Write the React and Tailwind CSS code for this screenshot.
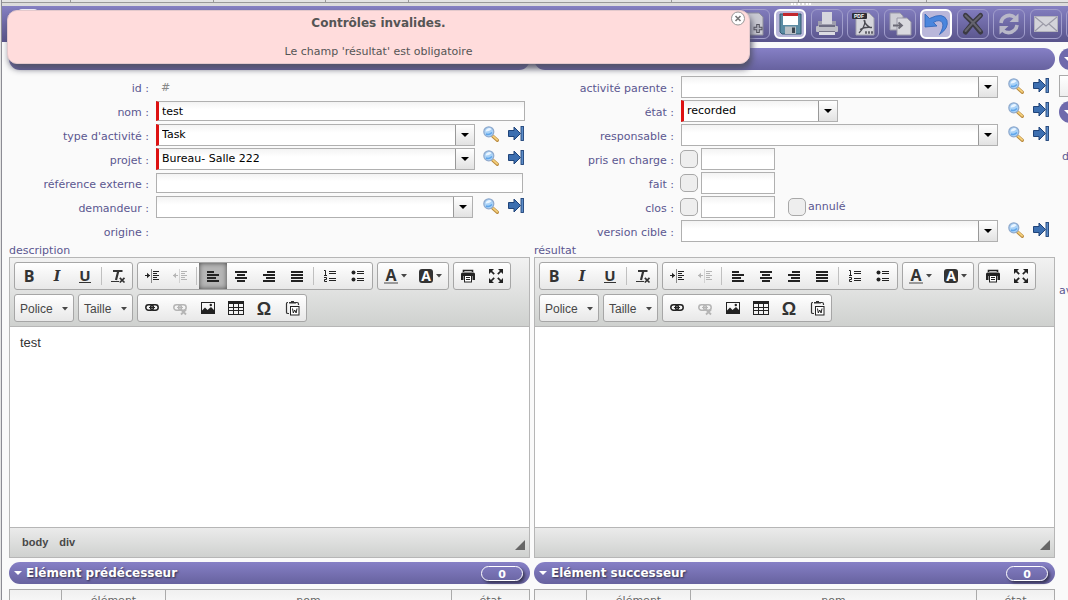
import React from "react";

/* ---------- icons ---------- */

const Svg = ({ size = 16, children, ...rest }) => (
  <svg width={size} height={size} viewBox={`0 0 ${size} ${size}`} fill="none" aria-hidden="true" className="shrink-0" {...rest}>
    {children}
  </svg>
);

const Magnifier = () => (
  <Svg>
    <path d="M9.8 10.2 L14.3 14.3" stroke="#b98a3e" strokeWidth="3.2" strokeLinecap="round" />
    <path d="M9.8 9.8 L14.2 13.9" stroke="#f7d27c" strokeWidth="1.6" strokeLinecap="round" />
    <circle cx="5.8" cy="5.8" r="5" fill="#a9d2f7" stroke="#8fa9cc" strokeWidth="1.2" />
    <path d="M2.5 5.5 A3.5 3.5 0 0 1 8.5 3.2 Q6 5.8 2.5 5.5" fill="#eaf5ff" />
    <path d="M3 8 Q6 9.5 9 6.5" stroke="#5ea5ea" strokeWidth="1.4" />
  </Svg>
);

const GotoArrow = () => (
  <Svg>
    <path d="M0.5 4.5 H6 V1 L12.5 7.5 L6 14 V10.5 H0.5 Z" fill="#3d6fb0" stroke="#1f4379" />
    <rect x="13" y="0.5" width="2.5" height="14" fill="#5b8cc8" stroke="#1f4379" strokeWidth="0.9" />
  </Svg>
);

const Lines = ({ rows, color = "#222" }) => (
  <Svg>
    {rows.map(([x, w], i) => (
      <rect key={i} x={x} y={3 + i * 3} width={w} height="2" fill={color} />
    ))}
  </Svg>
);

const Indent = ({ back, color = "#222" }) => (
  <Svg>
    <path d="M7.5 1.5 V14.5" stroke={color} strokeDasharray="1 1" />
    <path d="M9 3.5 H15 M9 5.5 H13 M9 7.5 H15 M9 9.5 H13 M9 11.5 H15" stroke={color} />
    <path d="M1 7.5 H6" stroke={color} />
    <path d={back ? "M4 4.8 L1 7.5 L4 10.2 Z" : "M3 4.8 L6 7.5 L3 10.2 Z"} fill={color} />
  </Svg>
);

const NumberList = () => (
  <Svg>
    <path d="M2 2.5 H3.5 V7 M2 7.5 H5 M2 9.5 H4.5 V11.5 H2.5 V13.5 H5" stroke="#222" />
    <path d="M7 3.5 H14 M7 5.5 H14 M7 10.5 H14 M7 12.5 H14" stroke="#222" />
  </Svg>
);

const BulletList = () => (
  <Svg>
    <circle cx="3.5" cy="4.5" r="2" fill="#222" />
    <circle cx="3.5" cy="11.5" r="2" fill="#222" />
    <path d="M7 3.5 H14 M7 5.5 H14 M7 10.5 H14 M7 12.5 H14" stroke="#222" />
  </Svg>
);

const PrintSmall = () => (
  <Svg>
    <path d="M3.5 4 V2.5 H12.5 V4" stroke="#222" strokeWidth="1.6" />
    <path d="M1 6 Q1 4.5 2.5 4.5 H13.5 Q15 4.5 15 6 V12 H12.5 V8 H3.5 V12 H1 Z" fill="#222" />
    <rect x="4.5" y="7.5" width="7" height="6.5" fill="#fff" stroke="#222" />
    <path d="M6 9.5 H10 M6 11.5 H10" stroke="#222" />
  </Svg>
);

const Maximize = () => (
  <Svg>
    <path d="M1 1 H6 L1 6 Z M15 1 V6 L10 1 Z M1 15 V10 L6 15 Z M15 15 H10 L15 10 Z" fill="#222" />
    <path d="M2 2 L6.2 6.2 M14 2 L9.8 6.2 M2 14 L6.2 9.8 M14 14 L9.8 9.8" stroke="#222" strokeWidth="1.7" />
  </Svg>
);

const Link = ({ broken, color = "#222" }) => (
  <Svg>
    <rect x="1.8" y="4.8" width="7.6" height="5.4" rx="2.7" stroke={color} strokeWidth="1.5" />
    <rect x="6.6" y="4.8" width="7.6" height="5.4" rx="2.7" stroke={color} strokeWidth="1.5" />
    <path d="M5 7.5 H11" stroke={color} />
    {broken && <path d="M9 9.5 L14 14.5 M14 9.5 L9 14.5" stroke={color} strokeWidth="1.8" />}
  </Svg>
);

const Picture = () => (
  <Svg>
    <rect x="1.5" y="2.5" width="13" height="11" stroke="#222" />
    <path d="M2 13 V10.5 L5 7.5 L7.5 10 L11 7 L14 10 V13 Z" fill="#222" />
    <circle cx="10.8" cy="5" r="1.2" fill="#222" />
  </Svg>
);

const TableIcon = () => (
  <Svg>
    <rect x="0.5" y="1.5" width="15" height="13" stroke="#222" />
    <rect x="0" y="1" width="16" height="3" fill="#222" />
    <path d="M5.5 3 V14 M10.5 3 V14 M1 7.5 H15 M1 10.5 H15" stroke="#222" />
  </Svg>
);

const PasteWord = () => (
  <Svg>
    <path d="M4 2.5 H3.5 Q2.5 2.5 2.5 4 V12.5 Q2.5 13.5 4 13.5 H5 M12 2.5 H13 Q14.5 2.5 14.5 4 V5" stroke="#333" strokeWidth="1.2" />
    <path d="M5 3.5 V2 H7 V1 H10 V2 H12 V3.5 Z" fill="#333" />
    <rect x="6.5" y="6.5" width="8.5" height="8.5" fill="#fff" stroke="#222" />
    <path d="M8.5 8.5 L9.3 13 L10.7 10 L12.1 13 L13 8.5" stroke="#222" />
  </Svg>
);

const ClearFormat = () => (
  <Svg>
    <path d="M3 3 H12.5 M8.3 3 L6 12" stroke="#333" strokeWidth="2.2" />
    <path d="M1 13.5 H9" stroke="#333" />
    <path d="M9.8 9.8 L14.5 14.5 M14.5 9.8 L9.8 14.5" stroke="#333" strokeWidth="1.7" />
  </Svg>
);

const SmallCaret = () => (
  <svg width="6" height="4" viewBox="0 0 6 4" aria-hidden="true" className="shrink-0">
    <path d="M0 0 H6 L3 3.5 Z" fill="#474747" />
  </svg>
);

const BigDoc = () => (
  <Svg size={26}>
    <path d="M4 2 H18 L22 6 V24 H4 Z" fill="#c9c9d2" stroke="#8e8e9c" />
    <path d="M17 13 V22 M12.5 17.5 H21.5" stroke="#55545f" strokeWidth="3.6" />
    <path d="M17 14 V21 M13.5 17.5 H20.5" stroke="#b5b5c0" strokeWidth="1.6" />
  </Svg>
);
const BigSave = () => (
  <Svg size={26}>
    <path d="M3 3 H24 V23 H5 L3 21 Z" fill="#5b8ba3" stroke="#31596f" />
    <rect x="6" y="3" width="15" height="11" fill="#fff" />
    <rect x="6" y="2" width="15" height="3" fill="#c1272d" />
    <rect x="8" y="15.5" width="11" height="7.5" fill="#b9bfc5" />
    <rect x="15" y="16.5" width="3" height="5.5" fill="#3c4550" />
  </Svg>
);
const BigPrint = () => (
  <Svg size={26}>
    <rect x="8" y="1" width="10" height="12" fill="#d6d6de" />
    <path d="M4 10 H8 V13 H18 V10 H22 V19 H4 Z" fill="#9f9eae" />
    <rect x="2" y="15" width="22" height="6" rx="1" fill="#bdbdc7" />
    <rect x="5" y="14" width="16" height="2" fill="#6e6d84" />
    <rect x="5" y="20" width="16" height="4" fill="#dcdce3" />
    <path d="M5 20.5 H21" stroke="#77758a" />
  </Svg>
);
const BigPdf = () => (
  <Svg size={26}>
    <path d="M6 2 H19 L24 7 V24 H6 Z" fill="#d6d6dc" stroke="#a1a1ac" />
    <rect x="2" y="2" width="15" height="6" rx="1" fill="#2e2e36" />
    <text x="4" y="7" fontSize="5" fontWeight="700" fontFamily="Liberation Sans, sans-serif" fill="#fff">PDF</text>
    <path d="M14 9 Q15 14 21 17 M15 9.5 Q15 16 9 22 M10 18.5 Q15 15.5 22 16.5" stroke="#4a4a52" strokeWidth="1.3" />
    <path d="M15 21.5 H23" stroke="#66666f" strokeWidth="2.4" strokeDasharray="2 1" />
  </Svg>
);
const BigCopy = () => (
  <Svg size={26}>
    <path d="M3 2 H13 L16 5 V19 H3 Z" fill="#cfcfd6" stroke="#9a99a8" />
    <path d="M10 7 H20 L24 11 V24 H10 Z" fill="#d9d9df" stroke="#9a99a8" />
    <path d="M6 14.5 H14 M11.5 11.5 L15 14.5 L11.5 17.5" stroke="#6b6a76" strokeWidth="1.8" />
  </Svg>
);
const BigUndo = () => (
  <Svg size={26}>
    <path d="M2 3 L2 16 L14 15 L10.5 11.5 Q17 7.5 19.5 12 Q21 16 16.5 23.5 Q26 17 24 9.5 Q20.5 0.5 6.5 7.5 Z" fill="#4a86dd" stroke="#2c62b8" strokeWidth="0.8" />
  </Svg>
);
const BigDelete = () => (
  <Svg size={26}>
    <path d="M5.5 4.5 Q13 11 20.5 21 M20.5 4.5 Q12 12 5.5 21" stroke="#3b3a43" strokeWidth="5" strokeLinecap="round" />
    <path d="M5.5 4.5 Q13 11 20.5 20 M20.5 4.5 Q12 12 5.5 20" stroke="#65646e" strokeWidth="2" strokeLinecap="round" />
  </Svg>
);
const BigRefresh = () => (
  <Svg size={26}>
    <path d="M5 12 A8.5 8.5 0 0 1 19 6.5" stroke="#b9b8c8" strokeWidth="3.6" />
    <path d="M22.5 2.5 V11 H13.5 Z" fill="#b9b8c8" />
    <path d="M21 14 A8.5 8.5 0 0 1 7 19.5" stroke="#b9b8c8" strokeWidth="3.6" />
    <path d="M3.5 23.5 V15 H12.5 Z" fill="#b9b8c8" />
  </Svg>
);
const BigMail = () => (
  <Svg size={26}>
    <rect x="1.5" y="5.5" width="23" height="15" fill="#d4d4da" stroke="#b3b3bd" />
    <path d="M2 6 L13 15 L24 6 M2 20 L10 13 M24 20 L16 13" stroke="#9b9aa7" strokeWidth="1.1" />
  </Svg>
);

/* ---------- main toolbar ---------- */

const tools = [
  { name: "Nouveau", icon: <BigDoc /> },
  { name: "Enregistrer", icon: <BigSave />, on: true },
  { name: "Imprimer", icon: <BigPrint /> },
  { name: "Exporter en PDF", icon: <BigPdf /> },
  { name: "Copier", icon: <BigCopy /> },
  { name: "Annuler", icon: <BigUndo />, on: true },
  { name: "Supprimer", icon: <BigDelete /> },
  { name: "Rafraîchir", icon: <BigRefresh /> },
  { name: "Envoyer", icon: <BigMail /> },
  { name: "Plus", icon: null },
];

const ToolBar = () => (
  <div className="flex h-9 shrink-0 items-center justify-end bg-linear-to-b from-[#8580c2] to-[#58538a] pl-4">
    <div className="mr-auto h-[30px] w-5 rounded bg-[#f0eff8]" />
    <div className="-mr-[30px] flex w-[360px] shrink-0 justify-between">
      {tools.map((t) => (
        <button
          key={t.name}
          type="button"
          aria-label={t.name}
          className={
            t.on
              ? "flex h-[30px] w-8 items-center justify-center rounded-md border-2 border-white bg-[#b9b7da]"
              : "flex h-[30px] w-8 items-center justify-center rounded-md border border-[#a09dcb]"
          }
        >
          {t.icon}
        </button>
      ))}
    </div>
  </div>
);

/* ---------- form ---------- */

const Row = ({ label, id, icons, children, end }) => (
  <div className={end || icons ? "flex h-6 items-start pr-[6px]" : "flex h-6 items-start pr-[5px]"}>
    <label htmlFor={id} className="w-[140px] shrink-0 pt-px text-right leading-6">
      {label}&nbsp;:
    </label>
    <div className="ml-[7px] flex min-w-0 flex-1 items-start">{children}</div>
    {icons && (
      <div className={end ? "ml-[10px] flex shrink-0 gap-[9px] pt-[2px]" : "ml-2 flex shrink-0 gap-[9px] pt-[2px]"}>
        <button type="button" aria-label="Rechercher"><Magnifier /></button>
        <button type="button" aria-label="Aller à"><GotoArrow /></button>
      </div>
    )}
  </div>
);

const Combo = ({ id, value = "", required, narrow, inset }) => (
  <div
    className={
      "relative flex h-[22px] border border-[#b0b0b0] bg-linear-to-b from-[#f3f3f3] to-white to-40% " +
      (narrow ? "w-[157px] " : "flex-1 ") +
      (inset ? "mr-[2px] " : "") +
      (required ? "border-l-[3px] border-l-[#dd1111]" : "")
    }
  >
    <select id={id} defaultValue={value} className="w-full appearance-none bg-transparent pt-px pr-5 pl-[3px] text-black outline-none">
      <option value={value}>{value}</option>
    </select>
    <span className="pointer-events-none absolute inset-y-0 right-0 flex w-[19px] items-center justify-center border-l border-[#999] bg-linear-to-b from-white to-[#e2e2e2]">
      <svg width="8" height="4" viewBox="0 0 8 4" aria-hidden="true"><path d="M0 0 H8 L4 4 Z" fill="#000" /></svg>
    </span>
  </div>
);

const fieldBase = "border border-[#b0b0b0] bg-linear-to-b from-[#f3f3f3] to-white to-40% text-black outline-none ";

const Check = ({ id, label }) => (
  <input
    id={id}
    type="checkbox"
    aria-label={label}
    className="mt-[2px] -ml-px h-[18px] w-[18px] shrink-0 appearance-none rounded-[5px] border border-[#a8a8a8] bg-[#eeeeee]"
  />
);

const CheckDate = ({ id, label, children }) => (
  <Row label={label} id={id} end>
    <Check id={id} />
    <input aria-label={"date " + label} className={fieldBase + "ml-[3px] h-[22px] w-[74px] px-1"} />
    {children}
  </Row>
);

/* ---------- rich text editor ---------- */

const Group = ({ children }) => (
  <div className="flex h-7 rounded-[3px] border border-[#a6a6a6] bg-linear-to-b from-white to-[#e8e8e8]">{children}</div>
);
const Btn = ({ label, children, active, wide }) => (
  <button
    type="button"
    aria-label={label}
    className={
      "flex h-full items-center justify-center text-[#333] " +
      (wide ? "w-[35px] gap-[3px] " : "w-7 ") +
      (active ? "bg-[#b5b5b5] shadow-[inset_0_0_5px_rgba(0,0,0,0.6)]" : "")
    }
  >
    {children}
  </button>
);
const Sep = () => <span className="mx-[2px] my-1 w-px bg-[#c0c0c0]" />;

const Editor = ({ label, text, path }) => (
  <section className="border border-[#b6b6b6] bg-white font-['Liberation_Sans',Arial,sans-serif]" aria-label={label}>
    <div className="flex flex-col gap-1 border-b border-[#b6b6b6] bg-linear-to-b from-[#f2f2f2] to-[#cfd1cf] p-1 text-xs text-[#474747]">
      <div className="flex gap-1">
        <Group>
          <Btn label="Gras"><span className="font-['Open_Sans',sans-serif] text-base font-bold">B</span></Btn>
          <Btn label="Italique"><span className="font-['DejaVu_Serif',serif] text-sm font-bold italic">I</span></Btn>
          <Btn label="Souligné"><span className="border-b border-[#333] font-['Open_Sans',sans-serif] text-[15px] leading-[13px] font-bold">U</span></Btn>
          <Sep />
          <Btn label="Supprimer la mise en forme"><ClearFormat /></Btn>
        </Group>
        <Group>
          <Btn label="Augmenter le retrait"><Indent /></Btn>
          <Btn label="Diminuer le retrait"><Indent back color="#b5b5b5" /></Btn>
          <Sep />
          <Btn label="Aligner à gauche" active={!!text}><Lines rows={[[2, 7], [2, 12], [2, 9], [2, 12]]} /></Btn>
          <Btn label="Centrer"><Lines rows={[[2, 12], [4, 8], [2, 12], [4, 8]]} /></Btn>
          <Btn label="Aligner à droite"><Lines rows={[[6, 8], [2, 12], [5, 9], [2, 12]]} /></Btn>
          <Btn label="Justifier"><Lines rows={[[2, 12], [2, 12], [2, 12], [2, 12]]} /></Btn>
          <Sep />
          <Btn label="Liste numérotée"><NumberList /></Btn>
          <Btn label="Liste à puces"><BulletList /></Btn>
        </Group>
        <Group>
          <Btn label="Couleur du texte" wide>
            <span className="border-b-2 border-[#999] px-px font-['Open_Sans',sans-serif] text-base leading-[14px] font-bold">A</span>
            <SmallCaret />
          </Btn>
          <Btn label="Couleur d'arrière-plan" wide>
            <span className="rounded-[3px] bg-[#333] px-[2px] font-['Open_Sans',sans-serif] text-sm leading-[14px] font-bold text-white">A</span>
            <SmallCaret />
          </Btn>
        </Group>
        <Group>
          <Btn label="Imprimer"><PrintSmall /></Btn>
          <Btn label="Agrandir"><Maximize /></Btn>
        </Group>
      </div>
      <div className="flex gap-1">
        <Group>
          <button type="button" className="flex w-[58px] items-center justify-between px-[5px] pt-px">Police <SmallCaret /></button>
        </Group>
        <Group>
          <button type="button" className="flex w-[53px] items-center justify-between px-[5px] pt-px">Taille <SmallCaret /></button>
        </Group>
        <Group>
          <Btn label="Lien"><Link /></Btn>
          <Btn label="Supprimer le lien"><Link broken color="#b5b5b5" /></Btn>
          <Btn label="Image"><Picture /></Btn>
          <Btn label="Tableau"><TableIcon /></Btn>
          <Btn label="Caractère spécial"><span className="pt-[2px] text-lg leading-5 font-bold">Ω</span></Btn>
          <Btn label="Coller depuis Word"><PasteWord /></Btn>
        </Group>
      </div>
    </div>
    <textarea aria-label={label} defaultValue={text} className="block h-[200px] w-full resize-none px-[10px] py-2 text-[13px] leading-4 text-[#333] outline-none" />
    <div className="flex h-[30px] items-center gap-[11px] border-t border-[#b6b6b6] bg-linear-to-b from-[#ebebeb] to-[#cfd1cf] pr-1 pl-3 text-[11px] font-bold text-[#484848]">
      {path.map((p) => <span key={p}>{p}</span>)}
      <svg width="10" height="10" viewBox="0 0 10 10" aria-hidden="true" className="mt-1 ml-auto"><path d="M10 0 V10 H0 Z" fill="#666" /></svg>
    </div>
  </section>
);

/* ---------- section bars and tables ---------- */

const barBase = "flex h-[22px] w-full items-center rounded-full bg-linear-to-b from-[#8680c6] to-[#67629f] ";

const TitleBar = ({ title }) => (
  <button type="button" className={barBase + "mt-1 pr-[7px] pl-[5px] font-bold text-white"}>
    <svg width="8" height="4" viewBox="0 0 8 4" aria-hidden="true" className="mr-[4px]"><path d="M0 0 H8 L4 4 Z" fill="#fff" /></svg>
    <span className="text-xs [text-shadow:1px_1px_2px_rgba(0,0,0,0.6)]">{title}</span>
    <span className="ml-auto h-[15px] w-[42px] rounded-full border border-white leading-[15px] shadow-[2px_2px_3px_rgba(0,0,0,0.5)]">0</span>
  </button>
);

const ItemTable = () => (
  <table className="mt-[5px] w-full table-fixed border-collapse border border-[#aaa] text-[#666]">
    <thead>
      <tr className="h-6 bg-linear-to-b from-[#f0f0f0] to-white">
        <th className="w-[52px] border border-[#aaa]" aria-label="actions" />
        <th className="w-[104px] border border-[#aaa] font-normal">élément</th>
        <th className="border border-[#aaa] font-normal">nom</th>
        <th className="w-[78px] border border-[#aaa] font-normal">état</th>
      </tr>
    </thead>
  </table>
);

const ListHeader = () => (
  <div className="flex h-[3px] shrink-0 items-end overflow-hidden border-b border-[#999] bg-[#e4e4e4]">
    <div className="h-full w-[69px] border-r border-[#999]" />
    <div className="h-full w-[143px] border-r border-[#999]" />
    <div className="h-full w-[112px] border-r border-[#999]" />
    <div className="h-full w-[83px] border-r border-[#999]" />
    <div className="h-full w-[263px] border-r border-[#999]" />
    <div className="h-full flex-1 border-r border-[#999]" />
    <div className="h-full w-[128px] border-r border-[#999]" />
    <div className="h-full w-[141px]" />
  </div>
);

const Toast = () => (
  <div
    role="alert"
    className="absolute top-[10px] right-[318px] left-[6px] h-[54px] rounded-[10px] border border-[#e3c9cc] bg-[#ffdcdc] text-center text-[#555] shadow-[2px_5px_6px_rgba(80,80,100,0.9)]"
  >
    <p className="pt-1 text-xs leading-4 font-bold">Contrôles invalides.</p>
    <p className="mt-3 leading-[18px]">Le champ 'résultat' est obligatoire</p>
    <button type="button" aria-label="Fermer" className="absolute top-0 right-[3px]">
      <Svg>
        <circle cx="8" cy="7.5" r="6.5" fill="#fff" stroke="#999" />
        <path d="M5.5 5 L10.5 10 M10.5 5 L5.5 10" stroke="#777" strokeWidth="1.6" />
      </Svg>
    </button>
  </div>
);

export default function App() {
  return (
    <div className="relative flex h-screen flex-col overflow-hidden border-l border-[#e4e4e4] bg-[#fafafa] font-['DejaVu_Sans',Verdana,sans-serif] text-[11px] text-[#5b5790]">
      <div className="flex min-h-0 flex-1 flex-col border-l border-[#8c8c94]">
        <ListHeader />
        <div className="flex h-[3px] shrink-0 justify-center bg-[#dcdcdc] pl-[532px]">
          <span className="h-[2px] w-5 border-t-2 border-dotted border-white" />
        </div>
        <ToolBar />

        <main className="flex items-start gap-1 pt-[6px] pl-[7px]">
          <div className="min-w-0 flex-1">
            <div className={barBase} />
            <div className="mt-[6px]">
              <Row label="id"><span className="pl-[5px] leading-6 text-[#888] italic">#</span></Row>
              <Row label="nom" id="nom">
                <input id="nom" defaultValue="test" className={fieldBase + "mt-px h-5 min-w-0 flex-1 border-l-[3px] border-l-[#dd1111] px-[3px]"} />
              </Row>
              <Row label="type d'activité" id="type" icons><Combo id="type" value="Task" required /></Row>
              <Row label="projet" id="projet" icons><Combo id="projet" value="Bureau- Salle 222" required /></Row>
              <Row label="référence externe" id="ref">
                <input id="ref" className={fieldBase + "mt-px mr-[2px] h-5 min-w-0 flex-1 px-1"} />
              </Row>
              <Row label="demandeur" id="demandeur" icons><Combo id="demandeur" inset /></Row>
              <Row label="origine" />
            </div>
            <h2 className="h-[13px] leading-[13px]">description</h2>
            <Editor label="description" text="test" path={["body", "div"]} />
            <TitleBar title="Elément prédécesseur" />
            <ItemTable />
          </div>

          <div className="min-w-0 flex-1">
            <div className={barBase} />
            <div className="mt-[6px]">
              <Row label="activité parente" id="parent" icons end><Combo id="parent" /></Row>
              <Row label="état" id="etat" icons end><Combo id="etat" value="recorded" required narrow /></Row>
              <Row label="responsable" id="resp" icons end><Combo id="resp" /></Row>
              <CheckDate id="charge" label="pris en charge" />
              <CheckDate id="fait" label="fait" />
              <CheckDate id="clos" label="clos">
                <span className="ml-[14px] flex gap-[2px]">
                  <Check id="annule" />
                  <label htmlFor="annule" className="leading-[22px]">annulé</label>
                </span>
              </CheckDate>
              <Row label="version cible" id="version" icons end><Combo id="version" /></Row>
            </div>
            <h2 className="h-[13px] leading-[13px]">résultat</h2>
            <Editor label="résultat" text="" path={[]} />
            <TitleBar title="Elément successeur" />
            <ItemTable />
          </div>

          <aside className="w-[9px] shrink-0 overflow-hidden whitespace-nowrap">
            <div className="flex h-[22px] w-10 items-center rounded-full bg-[#6f6aac] pl-[5px]">
              <svg width="8" height="4" viewBox="0 0 8 4" aria-hidden="true"><path d="M0 0 H8 L4 4 Z" fill="#fff" /></svg>
            </div>
            <div className="mt-[5px] h-[22px] w-10 border border-[#aaa] bg-linear-to-b from-white to-[#eee]" />
            <div className="mt-1 flex h-[22px] w-10 items-center rounded-full bg-[#6f6aac] pl-[5px]">
              <svg width="8" height="4" viewBox="0 0 8 4" aria-hidden="true"><path d="M0 0 H8 L4 4 Z" fill="#fff" /></svg>
            </div>
            <p className="mt-[22px] pl-[3px] leading-6">d</p>
            <p className="mt-[110px] leading-6">av</p>
          </aside>
        </main>
      </div>
      <Toast />
    </div>
  );
}
